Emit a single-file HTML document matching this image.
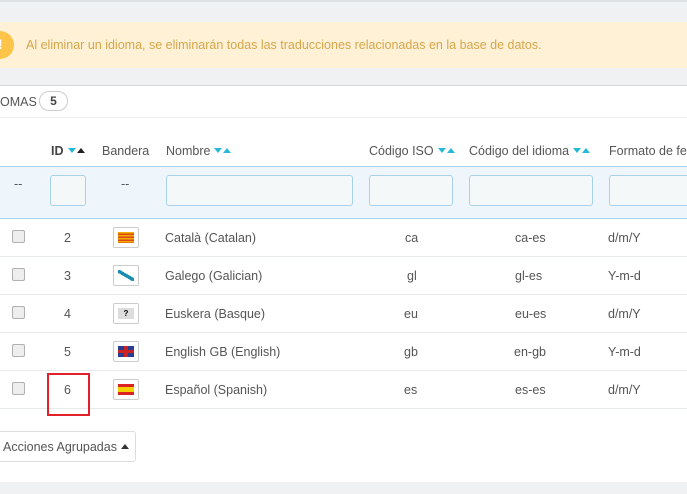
<!DOCTYPE html>
<html><head><meta charset="utf-8"><style>
*{margin:0;padding:0;box-sizing:border-box}
body{width:687px;height:494px;overflow:hidden;background:#eff1f3;font-family:"Liberation Sans",sans-serif;font-size:12.5px;color:#555;position:relative}
.a{position:absolute;white-space:nowrap}
.alert{left:0;top:22px;width:687px;height:46px;background:#fff1d6}
.icon{left:-14px;top:31px;width:28px;height:28px;border-radius:50%;background:#fcc549}
.panel{left:0;top:85px;width:687px;height:397px;background:#fff;border-top:1px solid #d3d8db}
.badge{left:39px;top:91px;width:29px;height:20px;border:1px solid #ccc;border-radius:10px;text-align:center;font-weight:bold;line-height:18px;color:#444;font-size:12px}
.tri{display:inline-block;width:0;height:0;border-left:4px solid transparent;border-right:4px solid transparent;vertical-align:2px;margin-left:1px}
.tri.dn:first-child,.sp{margin-left:4px}
.dn{border-top:5px solid #25b9d7}.up{border-bottom:5px solid #25b9d7}.upk{border-bottom:5px solid #222}
.filter{left:0;top:166px;width:687px;height:53px;background:#eef6fc;border-top:1px solid #a9d6ee;border-bottom:1px solid #a9d6ee}
.inp{position:absolute;top:175px;height:31px;background:#f5f8f9;border:1px solid #a8d2ea;border-radius:3px}
.row{position:absolute;left:0;width:687px;height:38px;border-bottom:1px solid #e6eaed}
.cb{position:absolute;left:12px;width:13px;height:13px;border:1px solid #b0b0b0;border-radius:2px;background:#eee}
.flag{position:absolute;left:113px;width:26px;height:21px;border:1px solid #ccc;border-radius:2px;background:#fff;padding:4px 4px}
.flag div{width:16px;height:11px}
</style></head><body>
<div class="a" style="left:0;top:0;width:687px;height:2px;background:#dfe2e5"></div>
<div class="a alert"></div>
<div class="a icon"></div>
<div class="a" style="left:-2px;top:36px;color:#fff;font-weight:bold;font-size:14px">!</div>
<div class="a" style="left:26px;top:38px;color:#d7a64b">Al eliminar un idioma, se eliminarán todas las traducciones relacionadas en la base de datos.</div>
<div class="a panel"></div>
<div class="a" style="left:0;top:95px;color:#555">OMAS</div>
<div class="a badge">5</div>
<div class="a" style="left:0;top:117px;width:687px;height:1px;background:#eee"></div>
<div class="a" style="left:51px;top:144px;font-weight:bold;color:#444">ID<span class="tri dn sp"></span><span class="tri upk"></span></div>
<div class="a" style="left:102px;top:144px">Bandera</div>
<div class="a" style="left:166px;top:144px">Nombre<span class="tri dn sp"></span><span class="tri up"></span></div>
<div class="a" style="left:369px;top:144px">Código ISO<span class="tri dn sp"></span><span class="tri up"></span></div>
<div class="a" style="left:469px;top:144px">Código del idioma<span class="tri dn sp"></span><span class="tri up"></span></div>
<div class="a" style="left:609px;top:144px">Formato de fe</div>
<div class="a filter"></div>
<div class="a" style="left:14px;top:177px">--</div>
<div class="a" style="left:121px;top:177px">--</div>
<div class="inp" style="left:50px;width:36px"></div>
<div class="inp" style="left:166px;width:187px"></div>
<div class="inp" style="left:369px;width:84px"></div>
<div class="inp" style="left:469px;width:124px"></div>
<div class="inp" style="left:609px;width:90px"></div>

<div class="row" style="top:219px"><div class="cb" style="top:11px"></div><div class="a" style="left:64px;top:12px">2</div><div class="flag" style="top:8px"><div style="background:repeating-linear-gradient(#f0b000 0 1.5px,#e0421a 1.5px 3px)"></div></div><div class="a" style="left:165px;top:12px">Català (Catalan)</div><div class="a" style="left:405px;top:12px">ca</div><div class="a" style="left:515px;top:12px">ca-es</div><div class="a" style="left:608px;top:12px">d/m/Y</div></div>
<div class="row" style="top:257px"><div class="cb" style="top:11px"></div><div class="a" style="left:64px;top:12px">3</div><div class="flag" style="top:8px"><div style="background:linear-gradient(30deg,#fff 40%,#1a8fb0 40% 60%,#fff 60%)"></div></div><div class="a" style="left:165px;top:12px">Galego (Galician)</div><div class="a" style="left:407px;top:12px">gl</div><div class="a" style="left:515px;top:12px">gl-es</div><div class="a" style="left:608px;top:12px">Y-m-d</div></div>
<div class="row" style="top:295px"><div class="cb" style="top:11px"></div><div class="a" style="left:64px;top:12px">4</div><div class="flag" style="top:8px"><div style="background:#ddd;font-size:8px;font-weight:bold;text-align:center;line-height:11px;color:#000">?</div></div><div class="a" style="left:165px;top:12px">Euskera (Basque)</div><div class="a" style="left:404px;top:12px">eu</div><div class="a" style="left:515px;top:12px">eu-es</div><div class="a" style="left:608px;top:12px">d/m/Y</div></div>
<div class="row" style="top:333px"><div class="cb" style="top:11px"></div><div class="a" style="left:64px;top:12px">5</div><div class="flag" style="top:8px"><div style="background:linear-gradient(#0000 4px,#c22 4px 7px,#0000 7px),linear-gradient(90deg,#0000 6px,#c22 6px 10px,#0000 10px),#2b3d8c"></div></div><div class="a" style="left:165px;top:12px">English GB (English)</div><div class="a" style="left:404px;top:12px">gb</div><div class="a" style="left:514px;top:12px">en-gb</div><div class="a" style="left:608px;top:12px">Y-m-d</div></div>
<div class="row" style="top:371px"><div class="cb" style="top:11px"></div><div class="a" style="left:64px;top:12px">6</div><div class="flag" style="top:8px"><div style="background:linear-gradient(#d22 3px,#f5d000 3px 8px,#d22 8px)"></div></div><div class="a" style="left:165px;top:12px">Español (Spanish)</div><div class="a" style="left:404px;top:12px">es</div><div class="a" style="left:515px;top:12px">es-es</div><div class="a" style="left:608px;top:12px">d/m/Y</div></div>

<div class="a" style="left:47px;top:373px;width:43px;height:43px;border:2px solid #e2202a"></div>
<div class="a" style="left:-5px;top:431px;width:141px;height:31px;border:1px solid #ddd;border-radius:3px;background:#fff"></div>
<div class="a" style="left:3px;top:440px">Acciones Agrupadas <span class="tri upk" style="border-bottom-color:#333"></span></div>
</body></html>
